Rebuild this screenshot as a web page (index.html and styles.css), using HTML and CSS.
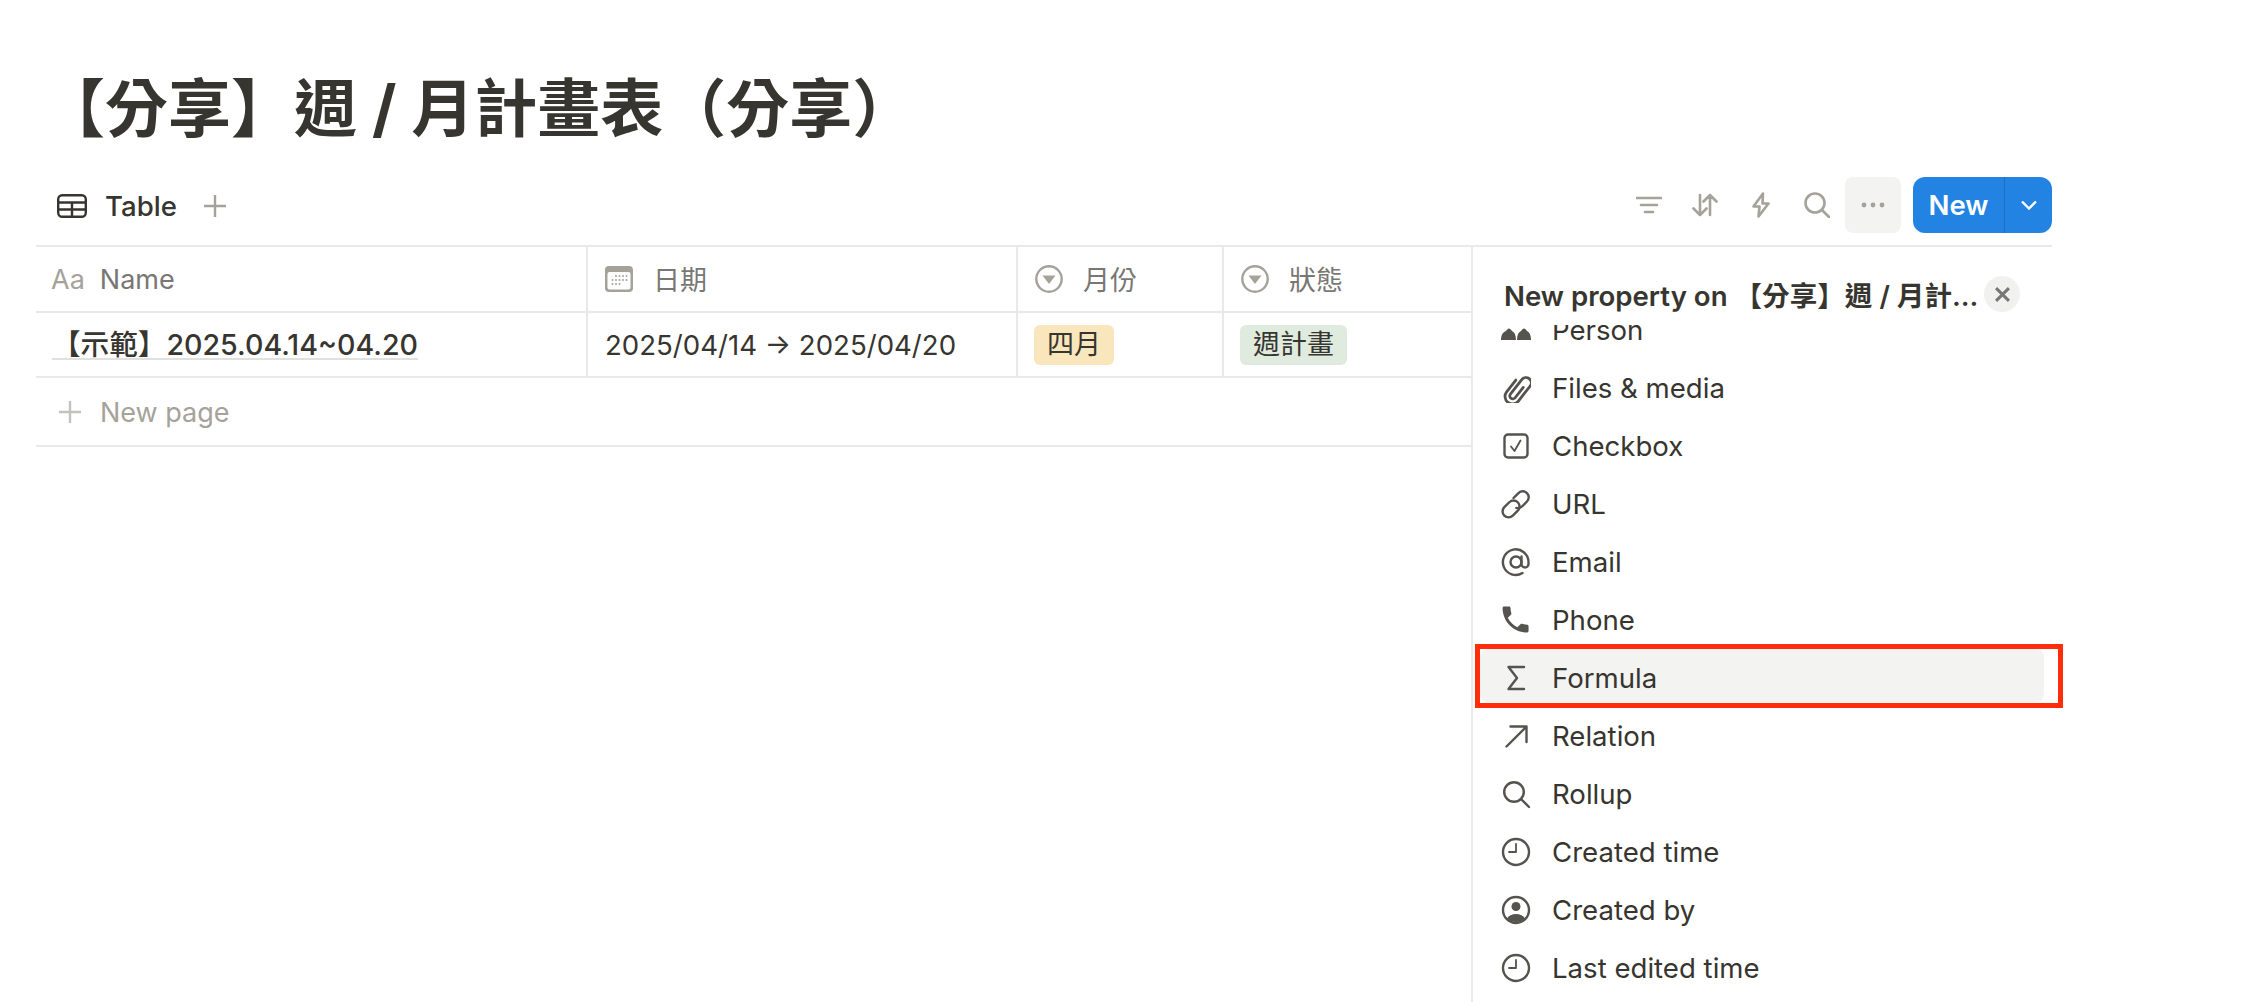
FILE: index.html
```html
<!doctype html>
<html lang="zh-Hant">
<head>
    <meta charset="utf-8">
    <title>【分享】週 / 月計畫表（分享）</title>
    <link rel="stylesheet" href="styles.css">
</head>
<body>
    <div class="page">
        <h1 class="title">【分享】週 / 月計畫表（分享）</h1>

        <div class="toolbar">
            <div class="tab">
                <svg class="tab-icon" viewBox="0 0 30 24" width="30" height="24"><rect x="1.2" y="1.2" width="27.6" height="21.6" rx="4"/><path d="M1 8.5h28M1 15.5h28M15 8.5v14"/></svg>
                <span class="tab-label">Table</span>
                <svg class="tab-add" viewBox="0 0 22 22" width="22" height="22"><path d="M11 0v22M0 11h22"/></svg>
            </div>
            <div class="tools">
                <button class="tool"><svg viewBox="0 0 26 18" width="26" height="18"><path d="M1 2h24M5 9h16M9 16h8"/></svg></button>
                <button class="tool"><svg viewBox="0 0 26 24" width="26" height="24"><path d="M8 2v20M1.5 15.5 8 22l6.500-6.500M18 22V2M11.500 8.500 18 2l6.500 6.500"/></svg></button>
                <button class="tool"><svg viewBox="0 0 18 26" width="18" height="26"><path d="M11 1.500 1.500 14.500H7.500L6.500 24.500 16.500 11.500H10.500z"/></svg></button>
                <button class="tool"><svg viewBox="0 0 26 26" width="26" height="26"><circle cx="11" cy="11" r="9.500"/><path d="M18 18l7 7"/></svg></button>
                <button class="tool tool-on"><svg viewBox="0 0 24 6" width="24" height="6"><circle cx="3" cy="3" r="2.400"/><circle cx="12" cy="3" r="2.400"/><circle cx="21" cy="3" r="2.400"/></svg></button>
                <div class="new-btn">
                    <span class="new-label">New</span>
                    <span class="new-arrow"><svg viewBox="0 0 18 10" width="18" height="10"><path d="M2 1.500l7 7 7-7"/></svg></span>
                </div>
            </div>
        </div>

        <div class="board">
            <div class="table">
                <div class="row row-head">
                    <div class="cell"><span class="aa">Aa</span><span class="head-name">Name</span></div>
                    <div class="cell">
                        <svg class="head-icon" viewBox="0 0 28 26" width="28" height="26"><rect width="28" height="26" rx="4" fill="#a5a29a"/><rect x="2.500" y="6" width="23" height="17.500" rx="2" fill="#fff"/><g fill="#a5a29a"><circle cx="11" cy="10" r="1"/><circle cx="14.500" cy="10" r="1"/><circle cx="18" cy="10" r="1"/><circle cx="21.500" cy="10" r="1"/><circle cx="7.500" cy="14" r="1"/><circle cx="11" cy="14" r="1"/><circle cx="14.500" cy="14" r="1"/><circle cx="18" cy="14" r="1"/><circle cx="21.500" cy="14" r="1"/><circle cx="7.500" cy="18" r="1"/><circle cx="11" cy="18" r="1"/><circle cx="14.500" cy="18" r="1"/></g></svg>
                        <span class="head-label">日期</span>
                    </div>
                    <div class="cell">
                        <svg class="head-icon" viewBox="0 0 28 28" width="28" height="28"><circle cx="14" cy="14" r="12.700" fill="none" stroke="#a5a29a" stroke-width="2.400"/><path d="M7.500 10.500h13L14 19z" fill="#a5a29a"/></svg>
                        <span class="head-label">月份</span>
                    </div>
                    <div class="cell">
                        <svg class="head-icon" viewBox="0 0 28 28" width="28" height="28"><circle cx="14" cy="14" r="12.700" fill="none" stroke="#a5a29a" stroke-width="2.400"/><path d="M7.500 10.500h13L14 19z" fill="#a5a29a"/></svg>
                        <span class="head-label">狀態</span>
                    </div>
                </div>
                <div class="row">
                    <div class="cell"><span class="page-link">【示範】2025.04.14~04.20</span></div>
                    <div class="cell">2025/04/14 → 2025/04/20</div>
                    <div class="cell"><span class="tag tag-yellow">四月</span></div>
                    <div class="cell"><span class="tag tag-green">週計畫</span></div>
                </div>
                <div class="new-page">
                    <svg viewBox="0 0 22 22" width="22" height="22"><path d="M11 0v22M0 11h22"/></svg>
                    <span>New page</span>
                </div>
            </div>

            <div class="panel">
                <div class="panel-head">
                    <span class="panel-title">New property on 【分享】週 / 月計...</span>
                    <span class="close"><svg viewBox="0 0 14 14" width="15" height="15"><path d="M1 1l12 12M13 1 1 13"/></svg></span>
                </div>
                <div class="list-wrap">
                    <ul class="list">
                        <li class="item">
                            <svg viewBox="0 0 30 30" width="30" height="30"><path class="solid" d="M0 25c0-5 2-8 5-9 1-1.500 2-2.500 3-2.500s2 1 3 2.500c2.500 1 4 4 4 9zM16 25c0-5 1.500-8 4-9 1-1.500 2-2.500 3-2.500s2 1 3 2.500c2.500 1 4 4 4 9z"/></svg>
                            <span>Person</span>
                        </li>
                        <li class="item">
                            <svg viewBox="0 0 30 30" width="30" height="30"><path transform="rotate(38 15 15) translate(2.500 -1.500) scale(1.150)" d="M15.500 10v11.500a2.600 2.600 0 0 1-5.200 0V5.500a4.600 4.600 0 0 1 9.200 0V22a6.500 6.500 0 0 1-13 0V9"/></svg>
                            <span>Files &amp; media</span>
                        </li>
                        <li class="item">
                            <svg viewBox="0 0 30 30" width="30" height="30"><rect x="3.500" y="3.500" width="23" height="23" rx="3.500"/><path class="thin" d="M10 15.500l3.500 4.500 6-10.500"/></svg>
                            <span>Checkbox</span>
                        </li>
                        <li class="item">
                            <svg viewBox="0 0 30 30" width="30" height="30"><g transform="rotate(-45 15 15)"><rect x="-1.500" y="9" width="19" height="12" rx="6"/><path d="M17.500 9h7a6 6 0 0 1 0 12h-7a6 6 0 0 1-5-3"/></g></svg>
                            <span>URL</span>
                        </li>
                        <li class="item">
                            <svg viewBox="0 0 30 30" width="30" height="30"><circle cx="15" cy="15" r="5.500"/><path d="M20.500 9.500V17a3.500 3.500 0 0 0 7 0v-2a12.800 12.800 0 1 0-6 11"/></svg>
                            <span>Email</span>
                        </li>
                        <li class="item">
                            <svg viewBox="1.900 1.900 20.800 20.800" width="30" height="30"><path class="solid" d="M6.620 10.790c1.440 2.830 3.760 5.140 6.590 6.590l2.200-2.200c.27-.27.67-.36 1.020-.24 1.120.37 2.330.57 3.570.57.55 0 1 .45 1 1V20c0 .55-.45 1-1 1-9.390 0-17-7.610-17-17 0-.55.45-1 1-1h3.500c.55 0 1 .45 1 1 0 1.250.2 2.450.57 3.570.11.35.03.74-.25 1.020l-2.200 2.200z"/></svg>
                            <span>Phone</span>
                        </li>
                        <li class="item item-on">
                            <svg viewBox="0 0 30 30" width="30" height="30"><path d="M23 4H7.500L16 15 7.500 26H23"/></svg>
                            <span>Formula</span>
                            <span class="mark"></span>
                        </li>
                        <li class="item">
                            <svg viewBox="0 0 30 30" width="30" height="30"><path d="M5.500 25.500 25 6M9.500 5.500H25.500V21"/></svg>
                            <span>Relation</span>
                        </li>
                        <li class="item">
                            <svg viewBox="0 0 30 30" width="30" height="30"><circle cx="13" cy="13" r="9.800"/><path d="M20 20l8 8"/></svg>
                            <span>Rollup</span>
                        </li>
                        <li class="item">
                            <svg viewBox="0 0 30 30" width="30" height="30"><circle cx="15" cy="15" r="13"/><path class="thin" d="M15 7v8H8"/></svg>
                            <span>Created time</span>
                        </li>
                        <li class="item">
                            <svg viewBox="0 0 30 30" width="30" height="30"><circle cx="15" cy="15" r="13"/><g class="solid"><circle cx="15" cy="11.500" r="4.500"/><path d="M6 23.500c1.500-3 5-4.500 9-4.500s7.500 1.500 9 4.500c-2.500 2.500-5.500 3.500-9 3.500s-6.500-1-9-3.500z"/></g></svg>
                            <span>Created by</span>
                        </li>
                        <li class="item">
                            <svg viewBox="0 0 30 30" width="30" height="30"><circle cx="15" cy="15" r="13"/><path class="thin" d="M15 7v8H8"/></svg>
                            <span>Last edited time</span>
                        </li>
                    </ul>
                </div>
            </div>
        </div>
    </div>
</body>
</html>
```

FILE: styles.css
```css
/* General styles */
html, body {
    margin: 0;
    padding: 0;
    height: 1002px;
    overflow: hidden;
    background-color: #fff;
}

body {
    font-family: Inter, "Noto Sans CJK TC", sans-serif;
    font-size: 27.6px;
    color: #37352f;
}

.page {
    width: 2016px;
    margin-left: 36px;
}

.title {
    margin: 0;
    height: 177px;
    box-sizing: border-box;
    padding: 63px 0 0 6px;
    font-size: 63px;
    line-height: 90px;
    font-weight: 700;
    color: #37352f;
    white-space: nowrap;
}

/* Toolbar */
.toolbar {
    display: flex;
    justify-content: space-between;
    height: 68px;
    box-sizing: border-box;
    padding-bottom: 12px;
}

.tab {
    display: flex;
    align-items: center;
    padding-left: 21px;
    padding-top: 1px;
}

.tab-icon {
    fill: none;
    stroke: #37352f;
    stroke-width: 2.4;
}

.tab-label {
    margin-left: 18px;
    font-weight: 500;
}

.tab-add {
    margin-left: 27px;
    stroke: #a5a29a;
    stroke-width: 2.4;
}

.tools {
    display: flex;
    align-items: center;
}

.tool {
    display: flex;
    align-items: center;
    justify-content: center;
    width: 56px;
    height: 56px;
    padding: 0;
    border: none;
    border-radius: 8px;
    background: none;
}

.tool svg {
    fill: none;
    stroke: #a5a29a;
    stroke-width: 2.6;
    stroke-linecap: round;
    stroke-linejoin: round;
}

.tool-on {
    background-color: #f3f3f2;
}

.tool-on svg {
    fill: #a5a29a;
    stroke: none;
}

.new-btn {
    display: flex;
    height: 56px;
    margin-left: 12px;
    border-radius: 12px;
    background-color: #2383e2;
    color: #fff;
    font-weight: 600;
}

.new-label {
    display: flex;
    align-items: center;
    justify-content: center;
    width: 91px;
    border-right: 1px solid #1f6fc0;
}

.new-arrow {
    display: flex;
    align-items: center;
    justify-content: center;
    width: 47px;
}

.new-arrow svg {
    fill: none;
    stroke: #fff;
    stroke-width: 2.4;
}

/* Table */
.board {
    display: flex;
    border-top: 2px solid #e9e9e7;
}

.table {
    width: 1435px;
    flex: none;
}

.row {
    display: grid;
    grid-template-columns: 552px 430px 206px 247px;
    height: 65px;
    border-bottom: 2px solid #e9e9e7;
    box-sizing: border-box;
}

.row-head {
    height: 66px;
    color: #787774;
    font-size: 27px;
}

.cell {
    display: flex;
    align-items: center;
    padding-left: 17px;
    border-right: 2px solid #e9e9e7;
    white-space: nowrap;
}

.cell:first-child {
    padding-left: 16px;
}

.cell:last-child {
    border-right: none;
}

.aa {
    color: #a5a29a;
    font-size: 27px;
    margin-left: -1px;
}

.head-icon {
    flex: none;
}

.head-label {
    margin: -2px 0 0 20px;
}

.head-name {
    margin-left: 15px;
}

.page-link {
    font-size: 28.6px;
    font-weight: 500;
    line-height: 26px;
    margin-top: 2px;
    border-bottom: 2px solid #e0e0de;
}

.tag {
    height: 40px;
    line-height: 40px;
    margin-left: -1px;
    padding: 0 13px;
    border-radius: 6px;
    font-size: 27px;
}

.tag-yellow {
    background-color: #fae6bd;
}

.tag-green {
    background-color: #dfebdf;
}

.new-page {
    display: flex;
    align-items: center;
    height: 69px;
    border-bottom: 2px solid #e9e9e7;
    box-sizing: border-box;
    padding: 1px 0 0 23px;
    color: #a5a29a;
    font-size: 27px;
}

.new-page svg {
    stroke: #c4c2bc;
    stroke-width: 2.4;
}

.new-page span {
    margin-left: 19px;
}

/* New property panel */
.panel {
    flex: 1;
    border-left: 2px solid #e9e9e7;
    height: 755px;
    box-sizing: border-box;
}

.panel-head {
    display: flex;
    align-items: center;
    justify-content: space-between;
    height: 78px;
    box-sizing: border-box;
    padding: 16px 32px 0 31px;
}

.panel-title {
    font-weight: 600;
    white-space: nowrap;
}

.close {
    display: flex;
    align-items: center;
    justify-content: center;
    flex: none;
    width: 36px;
    height: 36px;
    border-radius: 50%;
    background-color: #f1f1ef;
}

.close svg {
    stroke: #787774;
    stroke-width: 2.8;
}

/* the list is scrolled, Person is cut by the panel head */
.list-wrap {
    height: 677px;
    margin-right: -20px;
    overflow: hidden;
}

.list {
    list-style: none;
    margin: -24px 0 0 7px;
    padding: 0;
    width: 564px;
}

.item {
    position: relative;
    display: flex;
    align-items: center;
    height: 53px;
    box-sizing: border-box;
    margin-bottom: 5px;
    padding: 4px 0 0 21px;
    border-radius: 8px;
}

.item svg {
    flex: none;
    fill: none;
    stroke: #55534e;
    stroke-width: 2.4;
    stroke-linecap: round;
    stroke-linejoin: round;
}

.item svg .thin {
    stroke-width: 1.800;
}

.item svg .solid {
    fill: #55534e;
    stroke: none;
}

.item > span:first-of-type {
    margin-left: 21px;
}

.item-on {
    background-color: #f3f3f2;
}

/* red annotation drawn over the Formula row */
.mark {
    position: absolute;
    top: -5px;
    left: -5px;
    right: -19px;
    bottom: -6px;
    border: 5px solid #ff2d0a;
}
```
